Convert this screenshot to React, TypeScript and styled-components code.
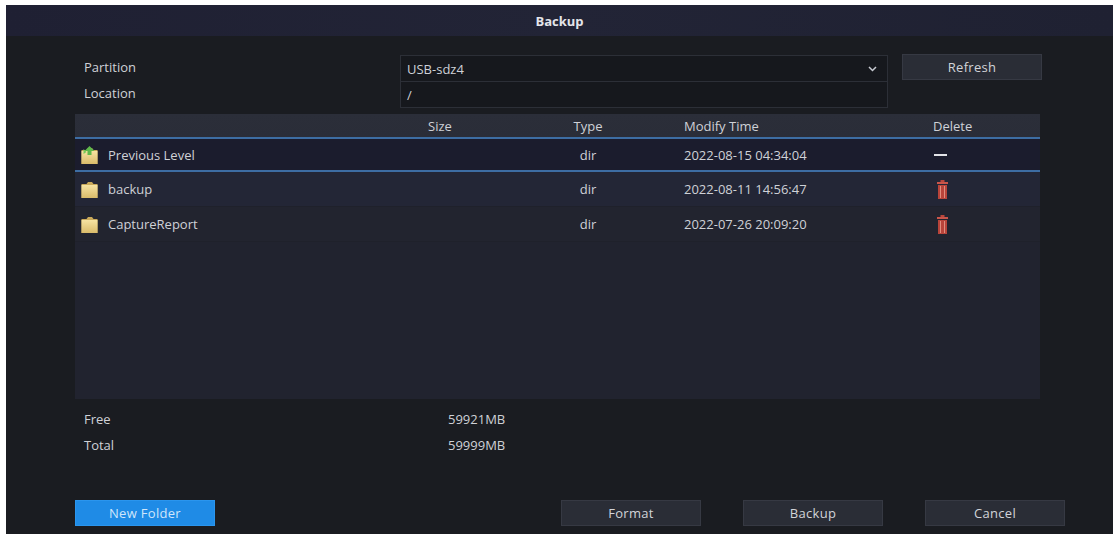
import styled, { createGlobalStyle } from "styled-components";

const GlobalStyle = createGlobalStyle`
  html, body {
    margin: 0;
    padding: 0;
    background: #ffffff;
  }
  body {
    font-family: "Open Sans", "DejaVu Sans", sans-serif;
    font-size: 13px;
    color: #cfd1d7;
  }
`;

type FileRow = {
  name: string;
  type: string;
  time: string;
  parent?: boolean;
};

const rows: FileRow[] = [
  { name: "Previous Level", type: "dir", time: "2022-08-15 04:34:04", parent: true },
  { name: "backup", type: "dir", time: "2022-08-11 14:56:47" },
  { name: "CaptureReport", type: "dir", time: "2022-07-26 20:09:20" },
];

const Folder = ({ up }: { up?: boolean }) => (
  <svg width="19" height="20" viewBox="0 0 18 20">
    <defs>
      <linearGradient id={up ? "fu" : "fd"} x1="0" y1="0" x2="0" y2="1">
        <stop offset="0" stopColor="#f6e3a2" />
        <stop offset="1" stopColor="#d9bb6a" />
      </linearGradient>
    </defs>
    <path d="M1 5 h5 l1.5 -2 h4 l1.5 2 h4 v14 h-16 z" fill="#c9a95a" />
    <rect x="1" y="6" width="16" height="13" fill={`url(#${up ? "fu" : "fd"})`} />
    {up && (
      <>
        <path d="M9 1 l5 5 h-3 v4 h-4 v-4 h-3 z" fill="#5fb84a" />
        <path d="M3 4 l3 3 l-3 2 z" fill="#79c95a" />
      </>
    )}
  </svg>
);

const Trash = () => (
  <svg width="11" height="19" viewBox="0 0 11 19">
    <rect x="3.5" y="0" width="4" height="2" fill="#b9473c" />
    <rect x="0" y="2" width="11" height="2" fill="#c9554a" />
    <rect x="1" y="5" width="9" height="14" fill="#b8443a" />
    <rect x="3" y="6" width="1" height="12" fill="#df8d7f" />
    <rect x="7" y="6" width="1" height="12" fill="#df8d7f" />
  </svg>
);

const Chevron = () => (
  <svg width="9" height="6" viewBox="0 0 9 6">
    <path d="M1 1 l3.5 3.5 l3.5 -3.5" stroke="#c9ccd3" strokeWidth="1.5" fill="none" />
  </svg>
);

export default function App() {
  return (
    <>
      <GlobalStyle />
      <Dialog>
        <TitleBar>Backup</TitleBar>
        <Body>
          <FormArea>
            <Labels>
              <Label>Partition</Label>
              <Label>Location</Label>
            </Labels>
            <FieldBox>
              <Field $divider>
                USB-sdz4
                <Chevron />
              </Field>
              <Field>/</Field>
            </FieldBox>
            <Button $raised>Refresh</Button>
          </FormArea>

          <Table>
            <HeaderRow>
              <Cell />
              <Cell $center>Size</Cell>
              <Cell $center>Type</Cell>
              <Cell $pad={28}>Modify Time</Cell>
              <Cell $pad={33}>Delete</Cell>
            </HeaderRow>
            {rows.map((r) => (
              <Row key={r.name} $parent={r.parent}>
                <Cell $pad={5}>
                  <NameWrap>
                    <Folder up={r.parent} />
                    {r.name}
                  </NameWrap>
                </Cell>
                <Cell $center />
                <Cell $center>{r.type}</Cell>
                <Cell $pad={28}>{r.time}</Cell>
                <Cell $pad={37}>{r.parent ? <Dash /> : <Trash />}</Cell>
              </Row>
            ))}
          </Table>

          <Stats>
            <span>Free</span>
            <span>59921MB</span>
            <span>Total</span>
            <span>59999MB</span>
          </Stats>

          <Actions>
            <Button $primary>New Folder</Button>
            <ActionGroup>
              <Button>Format</Button>
              <Button>Backup</Button>
              <Button>Cancel</Button>
            </ActionGroup>
          </Actions>
        </Body>
      </Dialog>
    </>
  );
}

const Dialog = styled.div`
  margin: 5px 4px 0 6px;
  height: 529px;
  background: #1a1c21;
  display: flex;
  flex-direction: column;
  overflow: hidden;
`;

const TitleBar = styled.div`
  height: 31px;
  display: flex;
  align-items: center;
  justify-content: center;
  background: linear-gradient(90deg, #1f2033 0%, #222436 50%, #1f2132 100%);
  font-weight: 700;
  font-size: 13px;
  color: #e4e5ea;
`;

const Body = styled.div`
  flex: 1;
  display: flex;
  flex-direction: column;
  padding: 19px 48px 0 69px;
`;

const FormArea = styled.div`
  display: flex;
  align-items: flex-start;
  margin-right: 22px;
`;

const Labels = styled.div`
  width: 325px;
  display: flex;
  flex-direction: column;
  padding-left: 9px;
  box-sizing: border-box;
`;

const Label = styled.div`
  height: 26px;
  line-height: 25px;
`;

const FieldBox = styled.div`
  width: 488px;
  border: 1px solid #2c2f37;
  background: #16181d;
  box-sizing: border-box;
  margin-right: 14px;
`;

const Field = styled.div<{ $divider?: boolean }>`
  height: 25px;
  display: flex;
  align-items: center;
  justify-content: space-between;
  padding: 0 10px 0 6px;
  border-bottom: ${(p) => (p.$divider ? "1px solid #2c2f37" : "none")};
`;

const Button = styled.button<{ $primary?: boolean; $raised?: boolean }>`
  width: 140px;
  height: 26px;
  font-family: "Open Sans", "DejaVu Sans", sans-serif;
  font-size: 13px;
  color: ${(p) => (p.$primary ? "#cfe6fb" : "#d2d4d9")};
  background: ${(p) => (p.$primary ? "#1f8be6" : "#2a2d36")};
  border: 1px solid ${(p) => (p.$primary ? "#2a95ee" : "#363943")};
  padding: 0;
  margin-top: ${(p) => (p.$raised ? "-1px" : "0")};
  letter-spacing: 0.3px;
`;

const Table = styled.div`
  margin-top: 6px;
  margin-right: 25px;
  height: 285px;
  background: #21232f;
  display: flex;
  flex-direction: column;
`;

const grid = `
  display: grid;
  grid-template-columns: 285px 160px 136px 244px 1fr;
  align-items: center;
`;

const HeaderRow = styled.div`
  ${grid}
  height: 23px;
  background: linear-gradient(180deg, #2b2e39 0%, #2a2d38 100%);
  border-bottom: 2px solid #3d6da3;
`;

const Row = styled.div<{ $parent?: boolean }>`
  ${grid}
  height: ${(p) => (p.$parent ? "31px" : "34px")};
  background: ${(p) => (p.$parent ? "#1b1c2d" : "#22242f")};
  border-bottom: ${(p) => (p.$parent ? "2px solid #3d6da3" : "1px solid #1f212b")};
  &:nth-child(3) {
    background: #232636;
  }
`;

const Cell = styled.div<{ $center?: boolean; $pad?: number }>`
  display: flex;
  align-items: center;
  justify-content: ${(p) => (p.$center ? "center" : "flex-start")};
  padding-left: ${(p) => p.$pad ?? 0}px;
  white-space: nowrap;
`;

const NameWrap = styled.div`
  display: flex;
  align-items: center;
  gap: 9px;
`;

const Dash = styled.div`
  width: 13px;
  height: 2px;
  background: #e2e3e7;
  margin-left: -3px;
`;

const Stats = styled.div`
  margin-top: 7px;
  padding-left: 9px;
  display: grid;
  grid-template-columns: 364px auto;
  grid-auto-rows: 26px;
  align-items: center;
`;

const Actions = styled.div`
  margin-top: 42px;
  display: flex;
  align-items: center;
  justify-content: space-between;
`;

const ActionGroup = styled.div`
  display: flex;
  gap: 42px;
`;
